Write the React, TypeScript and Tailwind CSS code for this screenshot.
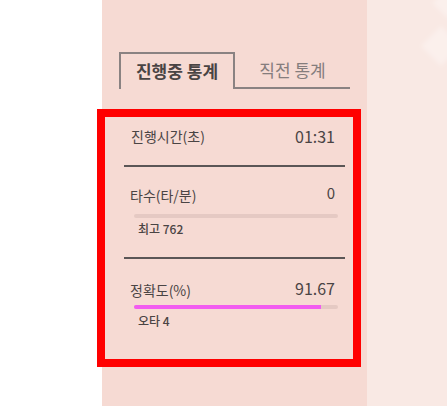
import React from "react";

const font = { fontFamily: '"Noto Sans CJK KR", "Noto Sans", sans-serif' };

export default function App() {
  return (
    <div className="relative flex h-[406px] w-[447px] overflow-hidden bg-white" style={font}>
      <div className="w-[102px] shrink-0 bg-white" />
      <div className="w-[265px] shrink-0 bg-[#f6dad3] pt-[52px]">
        {/* tabs */}
        <div className="ml-[17px] flex">
          <div className="flex h-[37px] w-[116px] items-center justify-center border-x-2 border-t-2 border-[#8a8282] pb-[2px] text-[17px] font-bold text-[#4a4444]">
            진행중 통계
          </div>
          <div className="flex h-[37px] w-[115px] items-center justify-center border-b-2 border-[#8a8282] text-[17px] text-[#857d7d]">
            직전 통계
          </div>
        </div>
        {/* stats */}
        <div className="mx-[22px] text-[#4a4444]">
          <div className="mt-[37px] flex h-[20px] items-center justify-between pl-[7px] pr-[10px]">
            <span className="text-[14px]">진행시간(초)</span>
            <span className="text-[16px]">01:31</span>
          </div>
          <div className="mt-[19px] h-[2px] bg-[#5b5656]" />
          <div className="mt-[18px] flex h-[20px] items-center justify-between pl-[6px] pr-[10px]">
            <span className="text-[14px]">타수(타/분)</span>
            <span className="mb-[4px] text-[15px]">0</span>
          </div>
          <div className="ml-[10px] mr-[7px] mt-[9px] h-[4px] rounded-full bg-[#e5c9c3]" />
          <div className="ml-[14px] mt-[4px] h-[14px] text-[12px] font-medium leading-[14px]">최고 762</div>
          <div className="mt-[21px] h-[2px] bg-[#5b5656]" />
          <div className="mt-[21px] flex h-[20px] items-center justify-between pl-[6px] pr-[10px]">
            <span className="text-[14px]">정확도(%)</span>
            <span className="mb-[5px] text-[16px]">91.67</span>
          </div>
          <div className="ml-[10px] mr-[7px] mt-[5px] flex h-[4px] overflow-hidden rounded-full bg-[#e5c9c3]">
            <div className="h-full bg-[#f25cf0]" style={{ width: "91.67%" }} />
          </div>
          <div className="ml-[14px] mt-[5px] h-[14px] text-[12px] font-medium leading-[14px]">오타 4</div>
        </div>
      </div>
      <div className="relative flex-1 bg-[#f9e9e4]">
        <div className="absolute left-[60px] top-[32px] h-[28px] w-[28px] rotate-45 bg-white/30 blur-[2px]" />
        <div className="absolute left-[70px] top-[-8px] h-[22px] w-[22px] rotate-45 bg-white/30 blur-[2px]" />
      </div>
      {/* highlight */}
      <div className="pointer-events-none absolute left-[97px] top-[109px] h-[258px] w-[264px] border-[8px] border-[#ff0000]" />
    </div>
  );
}
